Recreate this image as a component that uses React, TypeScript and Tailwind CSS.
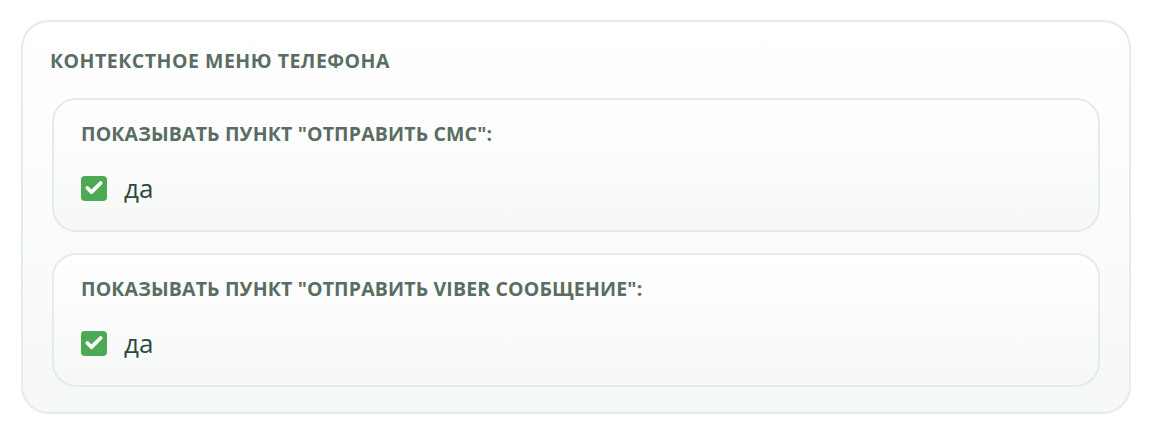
import { Check } from "lucide-react"

function Option({ label }: { label: string }) {
  return (
    <div className="rounded-[24px] border-2 border-[#e4ebe8] bg-gradient-to-b from-white to-[#f6f8f7] px-[27px] pt-[22px] pb-[29px]">
      <div className="text-[19.5px] leading-[24px] font-bold uppercase text-[#5a6d63] tracking-[0.15px]">
        {label}
      </div>
      <label className="mt-[29px] flex items-center gap-[17px]">
        <span className="flex h-[25px] w-[26px] items-center justify-center rounded-[4px] bg-[#4caa55]">
          <Check className="h-[20px] w-[20px] text-white" strokeWidth={4.5} />
        </span>
        <span className="text-[26px] leading-[26px] text-[#2e4a3d]">да</span>
      </label>
    </div>
  )
}

export default function App() {
  return (
    <div className="h-[432px] w-[1152px] bg-white px-[21px] pt-[20px]" style={{ fontFamily: '"Open Sans", "Noto Sans", sans-serif' }}>
      <div className="rounded-[28px] border-2 border-[#e4ebe8] bg-gradient-to-b from-white to-[#f6f8f7] px-[27px] pt-[27px] pb-[25px]">
        <h2 className="text-[19.5px] leading-[24px] font-bold uppercase text-[#5a6d63] tracking-[0.5px]">
          Контекстное меню телефона
        </h2>
        <div className="mt-[25px] flex flex-col gap-[21px] px-[2px]">
          <Option label={'Показывать пункт "отправить смс":'} />
          <Option label={'Показывать пункт "отправить viber сообщение":'} />
        </div>
      </div>
    </div>
  )
}
